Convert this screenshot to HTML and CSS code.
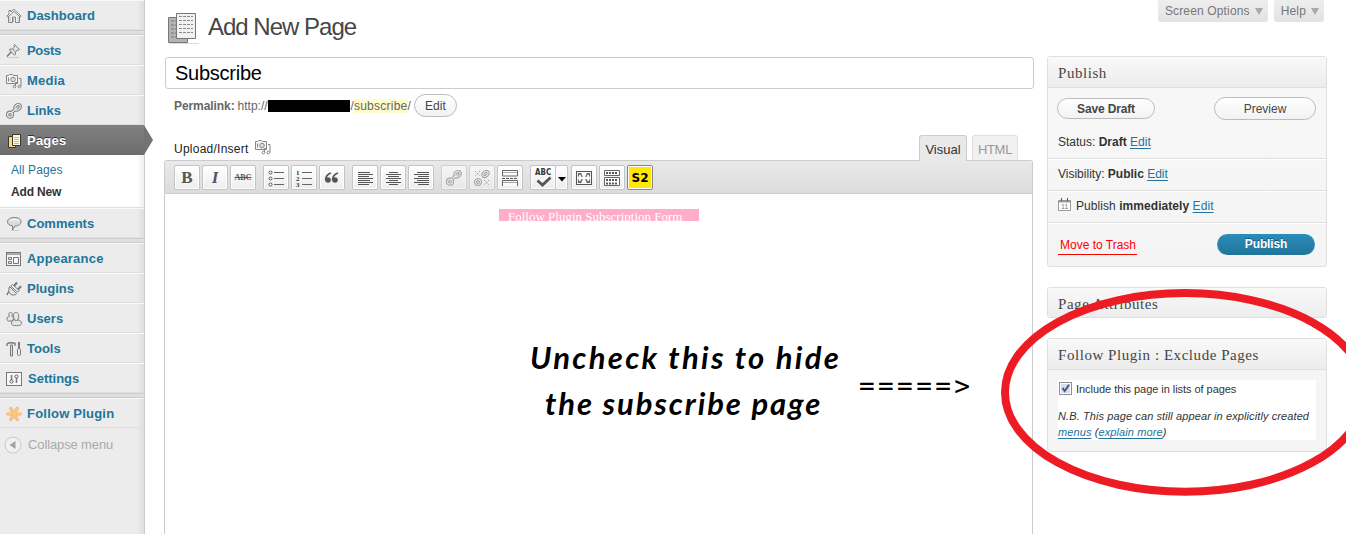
FILE: index.html
```
<!DOCTYPE html>
<html lang="en">
<head>
<meta charset="utf-8">
<title>Add New Page</title>
<link rel="stylesheet" href="styles.css">
</head>
<body>
<svg class="defs" aria-hidden="true">
  <symbol id="camera" viewBox="0 0 16 16"><g fill="none" stroke="#858585"><path d="M.5 2.500h2l1-1h3l1 1h4v8H.5z" fill="#f4f4f4"/><circle cx="7" cy="6.500" r="2.300" fill="#ddd"/><path d="M2.500 4.500v4M13 5.500h2v8M9.500 13V9.500h2"/><circle cx="8.500" cy="13.500" r="1.300"/><circle cx="13.300" cy="13.500" r="1.300"/></g></symbol>
  <symbol id="chain" viewBox="0 0 16 16"><g fill="none"><g stroke="#858585" stroke-width="3.400"><circle cx="4" cy="11.700" r="2.400"/><ellipse cx="11.500" cy="4.300" rx="3.100" ry="2.200" transform="rotate(-45 11.500 4.300)"/><path d="m5 10 6-5"/></g><g stroke="#e9e9e9" stroke-width="1.200"><circle cx="4" cy="11.700" r="2.400"/><ellipse cx="11.500" cy="4.300" rx="3.100" ry="2.200" transform="rotate(-45 11.500 4.300)"/><path d="m5 10 6-5"/></g></g></symbol>
</svg>

<div class="screen">
  <nav class="sidebar">
    <a class="item"><svg viewBox="0 0 16 16"><g fill="#f7f7f7" stroke="#858585"><path d="M2.500 8v6.500h4V9h3v5.500h4V8"/><path d="M.8 8.200 3 6V2.500h2V4l3-2.700 7.200 6.900-1 .8L8 3.500 1.800 9z"/><path d="M4 8.500v5M12 8.500v5M7.500 10v4" stroke="#b5b5b5"/></g></svg><span>Dashboard</span></a>
    <div class="sep"></div>
    <a class="item"><svg viewBox="0 0 16 16"><path d="M1 14.500h12" stroke="#ccc"/><path d="m1 13.500 5-5.500" stroke="#777" stroke-width="1.500"/><path d="m8.500 1.500 5 5-1 .8-1.200-.3-2 2.200.2 2.300-1 .7L3.300 7l.8-1h2.300l2.200-2-.8-1.500z" fill="#e5e5e5" stroke="#7c7c7c"/><path d="m6.500 6 2.500 2.500" stroke="#777"/></svg><span class="tight">Posts</span></a>
    <a class="item"><svg viewBox="0 0 16 16"><use href="#camera"/></svg><span class="wide">Media</span></a>
    <a class="item"><svg viewBox="0 0 16 16"><use href="#chain"/></svg><span>Links</span></a>
    <a class="item current"><svg viewBox="0 0 16 16"><path d="M2.500 3.500h7v11h-7z" fill="#f3dc88" stroke="#3d3929"/><path d="M6.500 1.500h8v11h-8z" fill="#fffbe5" stroke="#3d3929"/><path d="M8 4.500h5M8 6.500h5M8 8.500h5M8 10.500h5" stroke="#bdb89d"/></svg><span class="wide">Pages</span></a>
    <div class="submenu"><a>All Pages</a><a class="on">Add New</a></div>
    <a class="item"><svg viewBox="0 0 16 16"><path d="M5 14.500h8" stroke="#ccc"/><path d="M8.500 1.500c4 0 6.500 1.300 6.500 4S12.500 10 9 10l-2.500 4v-4.200C3.500 9.500 1.500 8 1.500 5.700 1.500 3 4.500 1.500 8.500 1.500z" fill="#dcdcdc" stroke="#7e7e7e"/><path d="M4 4.500q4-2 9 0" stroke="#fff" fill="none"/></svg><span>Comments</span></a>
    <div class="sep"></div>
    <a class="item"><svg viewBox="0 0 16 16"><rect x=".5" y="1.500" width="14" height="13" fill="#f5f5f5" stroke="#777"/><path d="M1 3h13.500" stroke="#aaa" stroke-width="2"/><path d="M2.500 6.500h3v2h-3zM2.500 10.500h3v2h-3zM7.500 6.500h5v6h-5z" fill="none" stroke="#777"/></svg><span class="wide">Appearance</span></a>
    <a class="item"><svg viewBox="0 0 16 16"><path d="M1 14q1-4 4-3" fill="none" stroke="#777" stroke-width="1.500"/><path d="m3.500 5.500 7 7-1 1.200c-2.500 1-4.300 0-5.500-1.200S2.300 9 3.500 5.500z" fill="#e5e5e5" stroke="#777"/><path d="m5 5.300 1.500-1.800 6.700 6-1.600 1.700z" fill="#f5f5f5" stroke="#777"/><path d="m8 5 3-3.500M12 8.500l3-3.300" stroke="#777" stroke-width="2"/></svg><span>Plugins</span></a>
    <a class="item"><svg viewBox="0 0 16 16"><g fill="#e6e6e6" stroke="#7e7e7e"><path d="M1 8c0-2 1-2.500 2.500-2.700C2 3 3 1.500 4.500 1.500S7 3 6 5.300L8 7l-2 3H2.500C1.500 10 1 9 1 8z"/><path d="M5.500 12.500c0-2.500 1.300-3.300 3-3.500C6.500 4.500 7.500 1.300 10 1.300S13.700 4.500 11.800 9c2 .2 3.700 1 3.700 3.500 0 1.500-2 2.200-5 2.200s-5-.7-5-2.200z"/><path d="M8.500 9q2 1.200 3.500 0" fill="none"/></g></svg><span>Users</span></a>
    <a class="item"><svg viewBox="0 0 16 16"><path d="M1 5V3q2-2 8-.8v2.500" fill="none" stroke="#7b7b7b" stroke-width="1.400"/><path d="M4.500 4h2v11h-2z" fill="#ddd" stroke="#7b7b7b"/><path d="M13 1v7" stroke="#7b7b7b" stroke-width="2"/><rect x="11.500" y="7.500" width="3" height="7" rx="1.200" fill="#eee" stroke="#7b7b7b"/></svg><span>Tools</span></a>
    <a class="item"><svg viewBox="0 0 16 16"><rect x=".5" y="1.500" width="15" height="13" fill="#f8f8f8" stroke="#777"/><path d="M5.500 4v5M10.500 6v6" stroke="#777" stroke-width="1.500"/><circle cx="5.500" cy="10.500" r="1.600" fill="#eee" stroke="#666"/><circle cx="10.500" cy="5.500" r="1.600" fill="#eee" stroke="#666"/></svg><span class="indent">Settings</span></a>
    <div class="sep"></div>
    <a class="item"><svg viewBox="0 0 16 16"><path d="M1.700 8h12.600M4.800 2.500l6.400 11M11.200 2.500l-6.400 11" stroke="#eeb066" stroke-width="3.200" stroke-linecap="round"/><path d="M1.700 8h12.600M4.800 2.500l6.400 11M11.200 2.500l-6.400 11" stroke="#fdc67e" stroke-width="2.200" stroke-linecap="round"/></svg><span class="wide">Follow Plugin</span></a>
    <a class="collapse"><svg viewBox="0 0 18 18"><circle cx="9" cy="9" r="8" fill="#f1f1f1" stroke="#c8c8c8"/><path d="m5.500 9 6-4v8z" fill="#a2a2a2"/></svg><span>Collapse menu</span></a>
    <svg class="pointer" viewBox="0 0 9 30"><path d="M0 0 9 15 0 30z" fill="#737373"/></svg>
  </nav>

  <main class="main">
    <header class="heading">
      <svg width="32" height="34" viewBox="0 0 32 34"><path d="M1 32.500h30" stroke="#ddd"/><path d="M.5 6.500h19v25H.5z" fill="#b4b4b4" stroke="#777"/><path d="M3 10h5m-5 4h5m-5 4h5m-5 4h5m-5 4h12" stroke="#777" stroke-dasharray="3 1"/><path d="M8.500 2.500h19v25h-19z" fill="#f1f1f1" stroke="#777"/><path d="M11 5.500h14m-14 4h14m-14 4h14m-14 4h14m-14 4h14" stroke="#8a8a8a" stroke-dasharray="3 1"/></svg>
      <h1>Add New Page</h1>
    </header>
    <div class="title">Subscribe</div>
    <div class="permalink"><b>Permalink:</b><span class="http">http://</span><i class="redact"></i><span class="slash">/</span><mark>subscribe</mark><span>/</span><button>Edit</button></div>
    <div class="above">
      <span class="upload">Upload/Insert</span><svg width="16" height="16"><use href="#camera"/></svg>
      <div class="tabs"><span class="tab active">Visual</span><span class="tab">HTML</span></div>
    </div>
    <section class="editor">
      <div class="toolbar">
        <div class="group"><span class="btn serif">B</span><span class="btn serif ital">I</span><span class="btn strike">ABC</span></div>
        <div class="group">
          <span class="btn"><svg viewBox="0 0 20 20"><path d="M8 4.500h10M8 10.500h10M8 16.500h10" stroke="#666"/><g fill="#fff" stroke="#555"><circle cx="4.500" cy="4.500" r="1.500"/><circle cx="4.500" cy="10.500" r="1.500"/><circle cx="4.500" cy="16.500" r="1.500"/></g></svg></span>
          <span class="btn"><svg viewBox="0 0 20 20"><path d="M8 4.500h10M8 10.500h10M8 16.500h10" stroke="#666"/><g class="num"><text x="2" y="7">1</text><text x="2" y="13">2</text><text x="2" y="19">3</text></g></svg></span>
          <span class="btn"><svg viewBox="0 0 20 20"><path d="M9 5Q3.500 7 3.500 12M16 5q-5.500 2-5.500 7" fill="none" stroke="#555" stroke-width="1.700"/><circle cx="6" cy="12" r="2.800" fill="#555"/><circle cx="13" cy="12" r="2.800" fill="#555"/></svg></span>
        </div>
        <div class="group">
          <span class="btn"><svg viewBox="0 0 20 20"><path d="M3 4.500h12M3 6.500h15M3 8.500h11M3 10.500h15M3 12.500h12M3 14.500h15M3 16.500h11" stroke="#555"/></svg></span>
          <span class="btn"><svg viewBox="0 0 20 20"><path d="M6 4.500h9M3 6.500h15M5 8.500h11M3 10.500h15M6 12.500h9M3 14.500h15M6 16.500h9" stroke="#555"/></svg></span>
          <span class="btn"><svg viewBox="0 0 20 20"><path d="M6 4.500h12M3 6.500h15M7 8.500h11M3 10.500h15M6 12.500h12M3 14.500h15M7 16.500h11" stroke="#555"/></svg></span>
        </div>
        <div class="group">
          <span class="btn faded"><svg viewBox="-2 -2 20 20"><use href="#chain" width="16" height="16"/></svg></span>
          <span class="btn faded"><svg viewBox="0 0 20 20"><g fill="none" stroke="#777"><ellipse cx="13.500" cy="6" rx="4" ry="3" transform="rotate(-45 13.500 6)"/><ellipse cx="13.500" cy="6" rx="2" ry="1" transform="rotate(-45 13.500 6)"/><circle cx="6" cy="14" r="3.500"/><circle cx="6" cy="14" r="1.500"/><path d="m3 3 5 5m0-5L3 8m9 4 5 5m0-5-5 5" stroke-dasharray="1.500 1"/></g></svg></span>
          <span class="btn"><svg viewBox="0 0 20 20"><path d="M2.500 8V2.500h15V8zM2.500 18v-5.500h15V18" fill="#fafafa" stroke="#666"/><path d="M3 4.500h14M3 14.500h14" stroke="#aaa"/><path d="M2 10.500h16" stroke="#555" stroke-dasharray="3 1"/></svg></span>
        </div>
        <div class="group">
          <span class="btn check"><span>ABC</span><svg viewBox="0 0 20 20"><path d="m4.500 12.500 5 4.500 8-7.500" fill="none" stroke="#555" stroke-width="2.800"/></svg></span><span class="btn drop"><svg viewBox="0 0 11 20"><path d="M2 9h8l-4 4.500z"/></svg></span>
          <span class="btn"><svg viewBox="0 0 20 20"><rect x="2.500" y="3.500" width="15" height="13" fill="#fafafa" stroke="#555"/><g fill="none" stroke="#666" stroke-width="1.200"><path d="M4.500 8.500v-3h3M12.500 5.500h3v3M15.500 11.500v3h-3M7.500 14.500h-3v-3"/><path d="M5 6q3 0 3 3M15 6q-3 0-3 3M5 14q3 0 3-3M15 14q-3 0-3-3"/></g></svg></span>
          <span class="btn"><svg viewBox="0 0 20 20"><path d="M2.500 2.500h15v5h-15zM2.500 9.500h15v8h-15z" fill="#fff" stroke="#666"/><path d="M4 5h12M4 12h12M4 15.500h12" stroke="#555" stroke-width="2" stroke-dasharray="2 1"/></svg></span>
          <span class="btn s2">S2</span>
        </div>
      </div>
      <div class="canvas">
        <div class="marker">Follow Plugin Subscription Form</div>
        <div class="note"><div class="hand"><div class="line1">Uncheck this to hide</div><div class="line2">the subscribe page</div></div><div class="arrow">=====&gt;</div></div>
      </div>
    </section>
  </main>

  <aside class="side">
    <div class="screen-links"><span>Screen Options <i></i></span><span>Help <i></i></span></div>
    <section class="box publish">
      <h2>Publish</h2>
      <div class="actions"><button class="save">Save Draft</button><button class="preview">Preview</button></div>
      <div class="row first"><span>Status: <b>Draft</b> <a>Edit</a></span></div>
      <div class="row"><span>Visibility: <b>Public</b> <a>Edit</a></span></div>
      <div class="row date"><svg width="14" height="14" viewBox="0 0 14 14"><path d="M.5 2.500h12v10H.5z" fill="#fff" stroke="#999"/><path d="M0 3.500h13" stroke="#999" stroke-width="2"/><path d="M3.500 0v3M9.500 0v3" stroke="#555"/><text x="3" y="11" class="calnum">11</text></svg><span>Publish <b>immediately</b> <a>Edit</a></span></div>
      <div class="row last"><a class="trash">Move to Trash</a><button class="primary">Publish</button></div>
    </section>
    <section class="box attrs"><h2>Page Attributes</h2></section>
    <section class="box exclude">
      <h2>Follow Plugin : Exclude Pages</h2>
      <div class="inner">
        <div class="include"><svg width="13" height="13" viewBox="0 0 13 13"><rect x=".5" y=".5" width="12" height="12" fill="#fff" stroke="#8c8f94"/><rect x="2" y="2" width="9" height="9" fill="#d9dde5"/><path d="m3.500 6 2.200 3L10 2.800" fill="none" stroke="#43569b" stroke-width="2"/></svg><span>Include this page in lists of pages</span></div>
        <p>N.B. This page can still appear in explicitly created<br><a>menus</a> (<a>explain more</a>)</p>
      </div>
    </section>
  </aside>
  <svg class="ring" width="1346" height="534" viewBox="0 0 1346 534"><ellipse cx="1185" cy="392.400" rx="180" ry="99.300" fill="none" stroke="#ed1c24" stroke-width="8"/></svg>
</div>
</body>
</html>
```
FILE: styles.css
```
* { box-sizing: border-box; }
body { margin: 0; background: #fff; color: #333; font: 12px/18px "Liberation Sans", Arial, sans-serif; }
.defs { display: none; }
.screen { position: relative; display: flex; width: 1346px; height: 534px; overflow: hidden; white-space: nowrap; }
a { color: #21759b; }
button { font: 12px/18px "Liberation Sans", Arial, sans-serif; color: #464646; padding: 0; border: 1px solid #bbb; border-radius: 12px; background: linear-gradient(#fff, #f2f2f2); }

.sidebar { position: relative; width: 145px; height: 534px; background: linear-gradient(90deg, transparent 137px, #dedede 144px), #ececec; border-right: 1px solid #ccc; flex: none; }
.item { display: flex; align-items: center; gap: 5px; height: 30px; padding: 1px 0 0 6px; border-top: 1px solid #f9f9f9; border-bottom: 1px solid #dfdfdf; font-weight: bold; font-size: 13px; }
.item svg { width: 16px; height: 16px; flex: none; }
.item span { padding-top: 1px; }
.item .wide { letter-spacing: .22px; }
.item .tight { letter-spacing: -.3px; }
.item .indent { padding-left: 1px; }
.sep { height: 5px; background: #dfdfdf; border-top: 1px solid #ccc; border-bottom: 1px solid #ccc; }
.current { background: linear-gradient(#808080, #6d6d6d); border-color: #808080 transparent #6d6d6d; color: #fff; text-shadow: 0 -1px 0 #333; }
.submenu { display: flex; flex-direction: column; height: 53px; padding: 4px 0 0 11px; background: linear-gradient(90deg, transparent 137px, #eee 144px), #fff; border-bottom: 1px solid #dfdfdf; line-height: 22px; }
.submenu a { letter-spacing: .1px; }
.submenu .on { color: #333; font-weight: bold; letter-spacing: -.15px; }
.pointer { position: absolute; left: 144px; top: 125px; width: 9px; height: 30px; }
.collapse { display: flex; align-items: center; gap: 6px; height: 33px; padding-left: 4px; color: #aaa; font-size: 13px; letter-spacing: -.12px; }
.collapse svg { width: 18px; height: 18px; }

.main { width: 869px; margin-left: 19px; flex: none; }
.heading { display: flex; height: 57px; padding: 11px 0 0 4px; gap: 8px; }
.heading h1 { margin: 0; font: 24px/32px "Liberation Sans", Arial, sans-serif; letter-spacing: -1px; color: #464646; }
.title { height: 32px; margin: 0 -1px 0 1px; padding-left: 9px; border: 1px solid #ccc; border-radius: 3px; font-size: 20px; line-height: 30px; letter-spacing: -.25px; color: #000; }
.permalink { display: flex; align-items: center; height: 33px; padding-left: 10px; color: #666; }
.permalink b { letter-spacing: -.08px; }
.http { margin-left: 3px; }
.redact { width: 82px; height: 12px; background: #000; }
.slash { margin-left: 1px; }
mark { background: #fffbcc; color: #666; height: 14px; line-height: 14px; letter-spacing: .25px; }
.permalink button { width: 43px; height: 23px; margin-left: 3px; }
.above { display: flex; height: 38px; padding: 13px 15px 0 10px; }
.upload { line-height: 29px; width: 81px; color: #222; letter-spacing: .25px; }
.above > svg { margin-top: 4px; }
.tabs { display: flex; gap: 5px; margin-left: auto; }
.tab { height: 25px; width: 46px; border: 1px solid #dfdfdf; border-bottom: 0; border-radius: 3px 3px 0 0; background: #f1f1f1; color: #999; text-align: center; line-height: 27px; font-size: 13px; letter-spacing: -.3px; }
.tab.active { width: 48px; height: 26px; z-index: 1; border-color: #ccc; background: #e9e9e9; color: #333; letter-spacing: 0; }
.editor { height: 380px; border: 1px solid #ccc; border-bottom: 0; border-radius: 3px 3px 0 0; }
.toolbar { display: flex; gap: 7px; height: 33px; padding: 4px 0 0 9px; background: linear-gradient(#e9e9e9, #dcdcdc); border-bottom: 1px solid #ccc; }
.group { display: flex; gap: 2px; }
.btn { display: flex; align-items: center; justify-content: center; width: 26px; height: 25px; border: 1px solid #c3c3c3; border-radius: 2px; background: linear-gradient(#fff, #ededed); box-shadow: inset 0 0 0 1px #fff; }
.btn svg { width: 20px; height: 20px; flex: none; }
.serif { font: bold 17px/20px "Liberation Serif", serif; color: #555; }
.ital { font-style: italic; }
.strike { font: bold 8px "Liberation Serif", serif; text-decoration: line-through; color: #555; }
.num { font: bold 7px "Liberation Serif", serif; fill: #333; }
.faded { opacity: .65; }
.btn.check { display: grid; place-items: center; width: 26px; }
.check > * { grid-area: 1 / 1; }
.check span { font: bold 8px/8px "DejaVu Sans", sans-serif; align-self: start; margin-top: 3px; transform: scaleX(.88); color: #333; }
.btn.drop { width: 13px; margin-left: -3px; margin-right: 1px; }
.drop svg { width: 11px; }
.btn.s2 { border-color: #888; background: #ffe800; box-shadow: inset 0 0 0 1px #fff; font: bold 12px "DejaVu Sans", sans-serif; color: #000; }
.marker { width: 200px; height: 12px; margin: 15px 0 0 334px; padding-left: 9px; overflow: hidden; background: #ffadc9; color: #fff; font: 13px/16px "Liberation Serif", serif; }
.note { display: flex; margin: 113px 0 0 365px; color: #000; }
.hand { width: 310px; font: italic bold 31px/46px Lato, cursive; }
.line1 { letter-spacing: 2.300px; }
.line2 { padding-left: 15px; letter-spacing: 1.900px; }
.arrow { margin: 27px 0 0 19px; font: 26px/50px "DejaVu Sans Mono", monospace; letter-spacing: 3.400px; }

.side { width: 280px; margin-left: 14px; flex: none; }
.screen-links { display: flex; justify-content: flex-end; gap: 6px; height: 56px; padding-right: 3px; color: #777; }
.screen-links span { display: flex; align-items: center; gap: 5px; height: 22px; padding: 0 5px 0 7px; border-radius: 0 0 3px 3px; background: linear-gradient(#eee, #e2e2e2); letter-spacing: .15px; }
.screen-links i { border: 4px solid transparent; border-top: 7px solid #aaa; border-bottom: 0; width: 8px; }
.box { border: 1px solid #dfdfdf; border-radius: 3px; background: #f5f5f5; }
.box h2 { height: 31px; margin: 0; padding-left: 10px; border-bottom: 1px solid #dfdfdf; background: linear-gradient(#f9f9f9, #ececec); font: 15px/32px "Liberation Serif", Georgia, serif; letter-spacing: .55px; color: #464646; }
.publish { height: 211px; background: linear-gradient(#f8f8f8, #f4f4f4); }
.actions { display: flex; justify-content: space-between; height: 39px; padding: 9px 10px 0 9px; }
.save { width: 98px; height: 21px; margin-top: 1px; font-weight: bold; letter-spacing: -.15px; }
.preview { width: 102px; height: 23px; }
.row { display: flex; align-items: center; height: 32px; padding: 0 11px 2px 10px; border-top: 1px solid #fff; border-bottom: 1px solid #dfdfdf; }
.row a, .inner a { text-decoration: underline; text-underline-offset: 2px; }
.row.first { border-top: 0; }
.row.date { letter-spacing: .06px; }
.row svg { margin-right: 4px; margin-top: -2px; }
.calnum { font: 7px "Liberation Sans", sans-serif; fill: #777; }
.row.last { height: 43px; border-bottom: 0; justify-content: space-between; }
.row .trash { color: #f00; border-bottom: 1px solid #f00; text-decoration: none; line-height: 17px; padding: 0 1px 0 2px; margin-top: 4px; }
.primary { width: 98px; height: 21px; border-color: #298cba #298cba #21759b; background: linear-gradient(#298cba, #21759b); color: #fff; font-weight: bold; letter-spacing: -.15px; text-shadow: 0 -1px 0 rgba(0,0,0,.4); }
.attrs { height: 31px; margin-top: 20px; overflow: hidden; }
.exclude { height: 114px; margin-top: 20px; padding: 0; }
.inner { width: 258px; height: 60px; margin: 10px 0 0 10px; background: #fff; font-size: 11px; line-height: 16px; }
.include { display: flex; gap: 4px; padding: 2px 0 0 1px; }
.include span { margin-top: -1px; letter-spacing: -.05px; }
.inner p { margin: 11px 0 0; font-style: italic; letter-spacing: .1px; }
.ring { position: absolute; left: 0; top: 0; pointer-events: none; }
```
